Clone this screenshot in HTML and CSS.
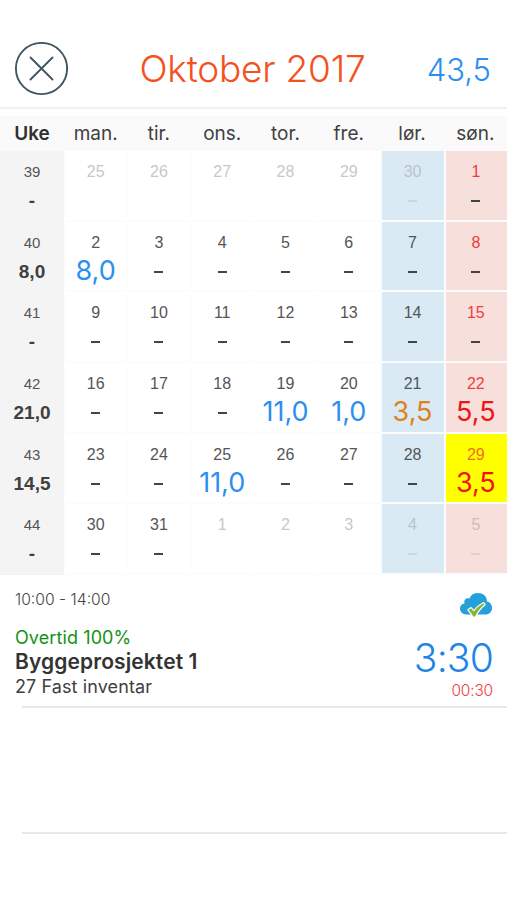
FILE: index.html
```html
<!DOCTYPE html>
<html lang="no">
<head>
    <meta charset="UTF-8">
    <meta name="viewport" content="width=device-width, initial-scale=1.0">
    <title>Oktober 2017</title>
    <link rel="stylesheet" href="styles.css">
</head>
<body>
    <header class="topbar">
        <button class="close" aria-label="Lukk">
            <svg width="54" height="54" viewBox="0 0 54 54" fill="none" stroke="#405762" stroke-width="1.9" stroke-linecap="round">
                <circle cx="27.500" cy="26.500" r="25.600"/>
                <path d="M16.500 15.500L38.500 37.500M38.500 15.500L16.500 37.500"/>
            </svg>
        </button>
        <h1 class="month">Oktober 2017</h1>
        <div class="total">43,5</div>
    </header>

    <div class="weekdays">
        <b>Uke</b><span>man.</span><span>tir.</span><span>ons.</span><span>tor.</span><span>fre.</span><span>lør.</span><span>søn.</span>
    </div>

    <main class="calendar">
        <div class="week"><span>39</span><b>-</b></div>
        <div class="day other"><span>25</span></div>
        <div class="day other"><span>26</span></div>
        <div class="day other"><span>27</span></div>
        <div class="day other"><span>28</span></div>
        <div class="day other"><span>29</span></div>
        <div class="day sat other"><span>30</span><i></i></div>
        <div class="day sun"><span>1</span><i></i></div>

        <div class="week"><span>40</span><b>8,0</b></div>
        <div class="day"><span>2</span><em>8,0</em></div>
        <div class="day"><span>3</span><i></i></div>
        <div class="day"><span>4</span><i></i></div>
        <div class="day"><span>5</span><i></i></div>
        <div class="day"><span>6</span><i></i></div>
        <div class="day sat"><span>7</span><i></i></div>
        <div class="day sun"><span>8</span><i></i></div>

        <div class="week"><span>41</span><b>-</b></div>
        <div class="day"><span>9</span><i></i></div>
        <div class="day"><span>10</span><i></i></div>
        <div class="day"><span>11</span><i></i></div>
        <div class="day"><span>12</span><i></i></div>
        <div class="day"><span>13</span><i></i></div>
        <div class="day sat"><span>14</span><i></i></div>
        <div class="day sun"><span>15</span><i></i></div>

        <div class="week"><span>42</span><b>21,0</b></div>
        <div class="day"><span>16</span><i></i></div>
        <div class="day"><span>17</span><i></i></div>
        <div class="day"><span>18</span><i></i></div>
        <div class="day"><span>19</span><em>11,0</em></div>
        <div class="day"><span>20</span><em>1,0</em></div>
        <div class="day sat"><span>21</span><em>3,5</em></div>
        <div class="day sun"><span>22</span><em>5,5</em></div>

        <div class="week"><span>43</span><b>14,5</b></div>
        <div class="day"><span>23</span><i></i></div>
        <div class="day"><span>24</span><i></i></div>
        <div class="day"><span>25</span><em>11,0</em></div>
        <div class="day"><span>26</span><i></i></div>
        <div class="day"><span>27</span><i></i></div>
        <div class="day sat"><span>28</span><i></i></div>
        <div class="day sun selected"><span>29</span><em>3,5</em></div>

        <div class="week"><span>44</span><b>-</b></div>
        <div class="day"><span>30</span><i></i></div>
        <div class="day"><span>31</span><i></i></div>
        <div class="day other"><span>1</span></div>
        <div class="day other"><span>2</span></div>
        <div class="day other"><span>3</span></div>
        <div class="day sat other"><span>4</span><i></i></div>
        <div class="day sun other"><span>5</span><i></i></div>
    </main>

    <section class="entry">
        <div class="info">
            <div class="time">10:00 - 14:00</div>
            <div class="type">Overtid 100%</div>
            <div class="project">Byggeprosjektet 1</div>
            <div class="task">27 Fast inventar</div>
        </div>
        <div class="hours">
            <svg class="cloud" width="34" height="26" viewBox="0 0 34 26">
                <path fill="#26a0da" d="M8 22.500C3.500 22.500 1 20 1 16.500C1 13.500 3 12 5.500 11.500C4.500 8 7 5.500 10.500 6.500C12 2.800 15 1 19 1C24 1 28 4 28 9.500C31 10 33 12.500 33 16C33 20 30 22.500 26.500 22.500Z"/>
                <path fill="#84b535" stroke="#fff" stroke-width="2.400" stroke-linejoin="round" paint-order="stroke" d="M9.500 18L12 16.200L15 19.500C17.500 16 20.500 13.300 24.500 11.300L25.500 12.500C21.500 15.500 18.500 19.500 16 24.500L14.300 24.500C13 22 11.500 20 9.500 18Z"/>
            </svg>
            <div class="duration">3:30</div>
            <div class="pause">00:30</div>
        </div>
    </section>
    <div class="empty-row"></div>
</body>
</html>
```
FILE: styles.css
```css
* {
    box-sizing: border-box;
}

body {
    margin: 0;
    height: 900px;
    background: #fff;
    font-family: Inter, "Liberation Sans", sans-serif;
    color: #404040;
}

.topbar {
    display: grid;
    grid-template-columns: 90px 1fr 90px;
    align-items: center;
    height: 109px;
    padding: 30px 16px 0 14px;
    border-bottom: 2px solid #f0f0f0;
}

.close {
    width: 54px;
    height: 54px;
    padding: 0;
    border: none;
    background: none;
}

.close svg {
    display: block;
}

.month {
    margin: 0;
    padding-top: 1px;
    font-size: 37px;
    font-weight: 300;
    line-height: 54px;
    text-align: center;
    letter-spacing: -0.2px;
    color: #f4511e;
    white-space: nowrap;
}

.total {
    padding-top: 1px;
    font-size: 31px;
    font-weight: 300;
    text-align: right;
    color: #2c8ff0;
}

.weekdays,
.calendar {
    display: grid;
    grid-template-columns: 64px repeat(7, 1fr);
}

.weekdays {
    height: 35px;
    margin-top: 7px;
    background: #fafafa;
    font-size: 19px;
    line-height: 35px;
    text-align: center;
}

.weekdays b {
    font-weight: 600;
    color: #303030;
}

.calendar {
    grid-template-rows: repeat(6, 70.7px);
    height: 424px;
}

.week,
.day {
    display: flex;
    flex-direction: column;
    align-items: center;
    padding-top: 11px;
}

.week {
    background: #f4f4f4;
}

.day {
    padding-right: 1px;
    background-clip: padding-box;
    border-left: 1px solid #fcfcfc;
    border-bottom: 2px solid #fcfcfc;
}

.week span,
.day span {
    font-family: "Liberation Sans", Arial, sans-serif;
    font-size: 16px;
    line-height: 20px;
    color: #555;
}

.week span {
    font-size: 15px;
}

.week b {
    font-family: "Liberation Sans", Arial, sans-serif;
    font-size: 19px;
    font-weight: bold;
    line-height: 38px;
    color: #404040;
}

.day em {
    font-size: 27px;
    font-style: normal;
    font-weight: 400;
    line-height: 36px;
    color: #2c8ff0;
}

.day i {
    width: 9px;
    height: 2px;
    margin-top: 18px;
    background: #444;
}

.sat {
    background-color: #d9eaf5;
    border-left-width: 2px;
}

.sun {
    background-color: #f7dfdc;
    border-left-width: 2px;
}

.sun span {
    color: #f23c3c;
}

.sat em {
    color: #e08018;
}

.sun em {
    color: #f01414;
}

.selected {
    background-color: #ff0;
}

.selected span {
    color: #f07020;
}

.other span {
    color: #c8c8c8;
}

.sat.other span {
    color: #b9c3ca;
}

.sun.other span {
    color: #d0bcba;
}

.sat.other i {
    background: #c3dae5;
}

.sun.other i {
    background: #eccac8;
}

.entry {
    display: flex;
    justify-content: space-between;
    height: 131px;
    padding: 0 14px 0 15px;
}

.info {
    padding-top: 15px;
}

.time {
    font-size: 15.7px;
    font-weight: 300;
    line-height: 20px;
    color: #444;
}

.type {
    margin-top: 16px;
    font-size: 18px;
    line-height: 24px;
    letter-spacing: 0.1px;
    color: #139313;
}

.project {
    font-size: 21px;
    font-weight: 600;
    line-height: 24px;
    letter-spacing: 0.1px;
    color: #333;
}

.task {
    font-size: 18px;
    line-height: 26px;
    letter-spacing: 0.1px;
}

.hours {
    display: flex;
    flex-direction: column;
    align-items: flex-end;
    padding-top: 17px;
}

.duration {
    margin-top: 16px;
    font-size: 39px;
    font-weight: 300;
    line-height: 48px;
    letter-spacing: -0.8px;
    color: #2083e8;
}

.pause {
    font-size: 15.5px;
    font-weight: 300;
    line-height: 17px;
    letter-spacing: -0.2px;
    color: #f23c3c;
}

.empty-row {
    height: 128px;
    margin-left: 22px;
    border-top: 2px solid #e8e8e8;
    border-bottom: 2px solid #e8e8e8;
}
```
